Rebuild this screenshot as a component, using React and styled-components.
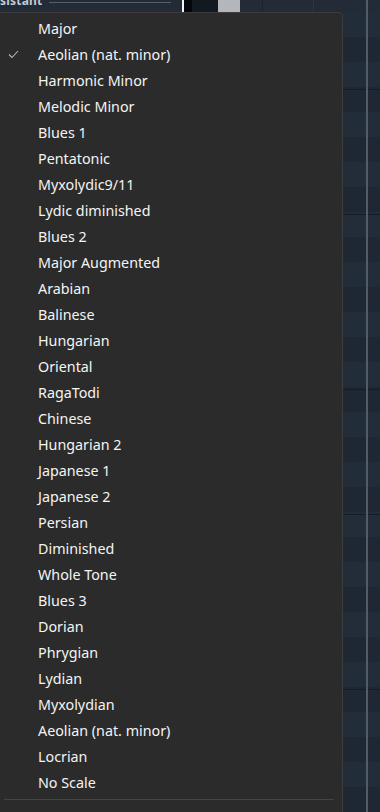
import styled, { createGlobalStyle } from "styled-components";

const GlobalStyle = createGlobalStyle`
  html, body {
    margin: 0;
    padding: 0;
    background: #222b36;
    overflow: hidden;
  }
  body {
    font-family: "Noto Sans", "Open Sans", sans-serif;
  }
`;

const Screen = styled.div`
  position: relative;
  width: 380px;
  height: 812px;
  overflow: hidden;
  background: #222b36;
`;

const Header = styled.div`
  display: flex;
  height: 12px;
  background: #222b36;
`;

const HeaderTitle = styled.div`
  width: 182px;
  display: flex;
  align-items: flex-start;
  gap: 7px;
  overflow: hidden;
`;

const TitleText = styled.span`
  font-family: "Noto Sans", sans-serif;
  font-weight: 700;
  font-size: 12px;
  line-height: 12px;
  color: #c3cad2;
  margin-top: -5px;
  letter-spacing: 0.2px;
`;

const TitleRule = styled.div`
  width: 122px;
  height: 1px;
  margin-top: 2px;
  background: #56606c;
`;

const Splitter = styled.div`
  width: ${(p) => p.$w}px;
  background: ${(p) => p.$c};
`;

const Grid = styled.div`
  flex: 1;
  background-color: #222b36;
  background-image:
    linear-gradient(to right,
      transparent 22px, #1b222b 22px, #1b222b 23px, transparent 23px,
      transparent 73px, #2c3643 73px, #2c3643 74px, transparent 74px,
      transparent 126px, #4f5c6b 126px, #4f5c6b 128px, transparent 128px);
`;

const Roll = styled.div`
  height: 800px;
  background-color: #232d3a;
  background-image: repeating-linear-gradient(
    to bottom,
    #232d3a 0px,
    #232d3a 25px,
    #1f2832 25px,
    #1f2832 50px
  );
  position: relative;
`;

const RollLines = styled.div`
  height: 100%;
  background-image:
    linear-gradient(to right,
      transparent 263px, #1b222b 263px, #1b222b 264px, transparent 264px,
      transparent 314px, #2e3946 314px, #2e3946 315px, transparent 315px,
      transparent 366px, #4f5c6b 366px, #4f5c6b 368px, transparent 368px),
    repeating-linear-gradient(
      to bottom,
      transparent 0px, transparent 77px,
      #161c23 77px, #161c23 78px,
      transparent 78px, transparent 202px,
      #161c23 202px, #161c23 203px,
      transparent 203px, transparent 300px
    );
`;

const Menu = styled.div`
  position: absolute;
  top: 12px;
  left: 0;
  width: 343px;
  bottom: -10px;
  background: #2b2b2b;
  border: 1px solid #3d3d3d;
  border-left: none;
  border-top-right-radius: 5px;
  padding-top: 2px;
  box-sizing: border-box;
`;

const Item = styled.div`
  display: flex;
  align-items: center;
  height: 26px;
  color: #f4f4f4;
  font-size: 14.3px;
  letter-spacing: 0;
`;

const CheckCell = styled.div`
  width: 38px;
  display: flex;
  align-items: center;
  padding-left: 8px;
  box-sizing: border-box;
`;

const Separator = styled.div`
  margin: 4px 8px 0 4px;
  height: 1px;
  background: #444444;
`;

const scales = [
  "Major",
  "Aeolian (nat. minor)",
  "Harmonic Minor",
  "Melodic Minor",
  "Blues 1",
  "Pentatonic",
  "Myxolydic9/11",
  "Lydic diminished",
  "Blues 2",
  "Major Augmented",
  "Arabian",
  "Balinese",
  "Hungarian",
  "Oriental",
  "RagaTodi",
  "Chinese",
  "Hungarian 2",
  "Japanese 1",
  "Japanese 2",
  "Persian",
  "Diminished",
  "Whole Tone",
  "Blues 3",
  "Dorian",
  "Phrygian",
  "Lydian",
  "Myxolydian",
  "Aeolian (nat. minor)",
  "Locrian",
  "No Scale",
];

const Check = () => (
  <svg width="11" height="9" viewBox="0 0 11 9">
    <polyline
      points="1,4.5 4,7.5 10,1"
      fill="none"
      stroke="#b8b8b8"
      strokeWidth="1.1"
    />
  </svg>
);

const App = () => {
  return (
    <Screen>
      <GlobalStyle />
      <Header>
        <HeaderTitle>
          <TitleText>sistant</TitleText>
          <TitleRule />
        </HeaderTitle>
        <Splitter $w={2} $c="#f2f4f6" />
        <Splitter $w={8} $c="#05080b" />
        <Splitter $w={26} $c="#121920" />
        <Splitter $w={22} $c="#b3b7bc" />
        <Grid />
      </Header>
      <Roll>
        <RollLines />
      </Roll>
      <Menu>
        {scales.map((name, i) => (
          <Item key={i}>
            <CheckCell>{i === 1 && <Check />}</CheckCell>
            {name}
          </Item>
        ))}
        <Separator />
      </Menu>
    </Screen>
  );
};

export default App;
